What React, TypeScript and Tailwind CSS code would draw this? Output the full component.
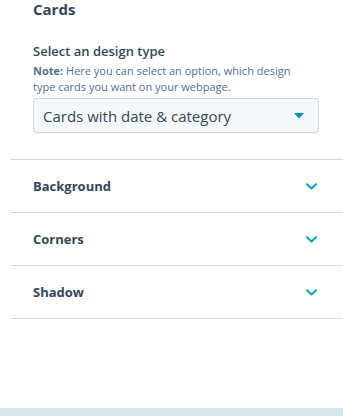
import { useState } from 'react'

const sections = ['Background', 'Corners', 'Shadow']

function Chevron() {
  return (
    <svg width="11" height="7" viewBox="0 0 11 7" fill="none">
      <path d="M1 1.2L5.5 5.5L10 1.2" stroke="#00a4bd" strokeWidth="2" strokeLinecap="round" strokeLinejoin="round" />
    </svg>
  )
}

export default function App() {
  const [design, setDesign] = useState('Cards with date & category')

  return (
    <div className="w-[343px] h-[416px] flex flex-col bg-white text-[#33475b] font-['Open_Sans',sans-serif] overflow-hidden">
      <div className="pl-[33px] pr-[24px]">
        <h2 className="text-[15px] leading-[18px] font-bold">Cards</h2>
        <label className="block mt-[24px] text-[13px] leading-[18px] font-semibold">Select an design type</label>
        <p className="mt-[3px] pr-[8px] text-[11px] leading-[16px] text-[#516f90]">
          <strong className="font-bold">Note:</strong>
          <span> Here you can select an option, which design type cards you want on your webpage.</span>
        </p>
        <div className="mt-[3px] h-[35px] flex items-center rounded-[3px] border border-[#cbd6e2] bg-[#f5f8fa] pl-[9px] pr-[14px]">
          <span className="flex-1 text-[15px] leading-[20px]">{design}</span>
          <svg width="10" height="6" viewBox="0 0 10 6" onClick={() => setDesign(design)}>
            <path d="M0 0H10L5 5.5Z" fill="#0091ae" />
          </svg>
        </div>
      </div>

      <div className="mt-[26px] ml-[11px] border-t border-[#cbd6e2]">
        {sections.map((s) => (
          <button
            key={s}
            className="w-full h-[53px] flex items-center justify-between border-b border-[#cbd6e2] pl-[22px] pr-[26px] text-left"
          >
            <span className="text-[13px] leading-[18px] font-bold">{s}</span>
            <Chevron />
          </button>
        ))}
      </div>

      <div className="flex-1" />
      <div className="h-[8px] bg-[#d6e5ed]" />
    </div>
  )
}
